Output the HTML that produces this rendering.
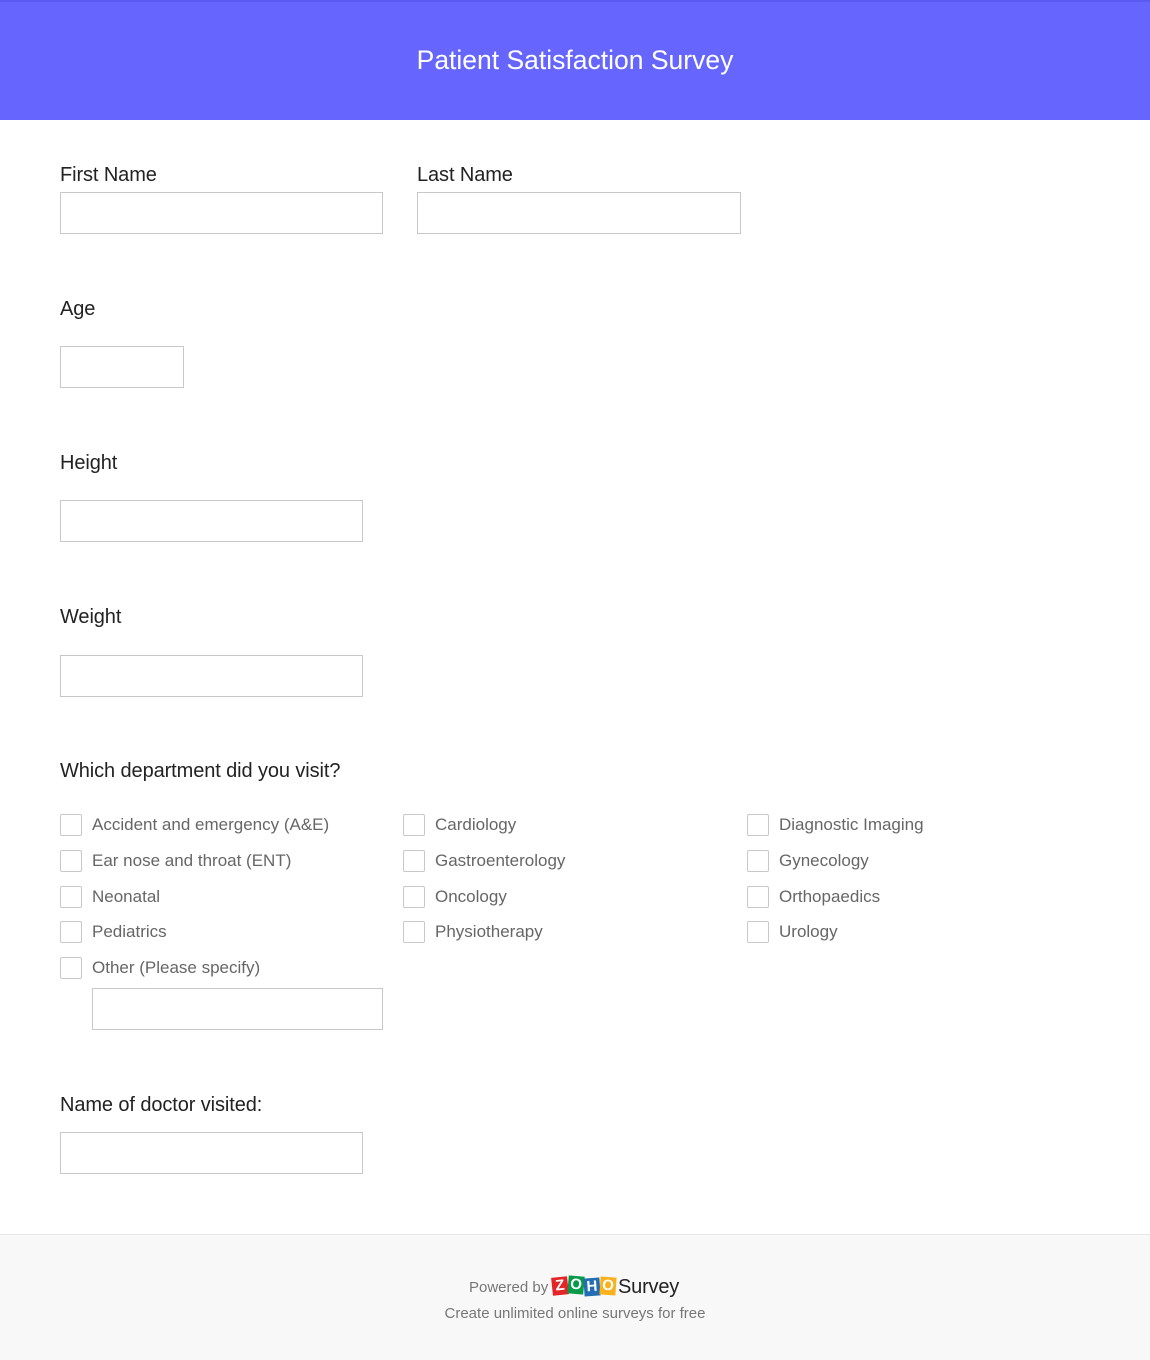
<!DOCTYPE html>
<html><head><style>
*{margin:0;padding:0;box-sizing:border-box}
body{width:1150px;height:1360px;background:#fff;font-family:"Liberation Sans",Arial,sans-serif;position:relative;overflow:hidden}
.hd{position:absolute;left:0;top:0;width:1150px;height:120px;background:#6666ff;border-top:2px solid #5a5af0;color:#fff;font-size:26.5px;text-align:center;line-height:116px}
.l{position:absolute;font-size:20px;color:#222;letter-spacing:-0.1px}
.i{position:absolute;border:1px solid #c8c8c8;height:42px;background:#fff}
.cb{position:absolute;width:22px;height:22px;border:1px solid #c8c8c8;border-radius:2px;background:#fff}
.o{position:absolute;font-size:17px;color:#666}
.ft{position:absolute;left:0;top:1234px;width:1150px;height:126px;background:#f8f8f8;border-top:1px solid #e8e8e8}
</style></head><body>
<div class="hd">Patient Satisfaction Survey</div>
<div class="l" style="left:60px;top:164px">First Name</div>
<div class="l" style="left:417px;top:164px">Last Name</div>
<div class="i" style="left:60px;top:192px;width:323px"></div>
<div class="i" style="left:417px;top:192px;width:324px"></div>
<div class="l" style="left:60px;top:298px">Age</div>
<div class="i" style="left:60px;top:346px;width:124px"></div>
<div class="l" style="left:60px;top:452px">Height</div>
<div class="i" style="left:60px;top:500px;width:303px"></div>
<div class="l" style="left:60px;top:606px">Weight</div>
<div class="i" style="left:60px;top:655px;width:303px"></div>
<div class="l" style="left:60px;top:760px">Which department did you visit?</div>

<div class="cb" style="left:60px;top:814px"></div><div class="o" style="left:92px;top:815px">Accident and emergency (A&amp;E)</div>
<div class="cb" style="left:60px;top:850px"></div><div class="o" style="left:92px;top:851px">Ear nose and throat (ENT)</div>
<div class="cb" style="left:60px;top:886px"></div><div class="o" style="left:92px;top:887px">Neonatal</div>
<div class="cb" style="left:60px;top:921px"></div><div class="o" style="left:92px;top:922px">Pediatrics</div>
<div class="cb" style="left:60px;top:957px"></div><div class="o" style="left:92px;top:958px">Other (Please specify)</div>
<div class="i" style="left:92px;top:988px;width:291px"></div>

<div class="cb" style="left:403px;top:814px"></div><div class="o" style="left:435px;top:815px">Cardiology</div>
<div class="cb" style="left:403px;top:850px"></div><div class="o" style="left:435px;top:851px">Gastroenterology</div>
<div class="cb" style="left:403px;top:886px"></div><div class="o" style="left:435px;top:887px">Oncology</div>
<div class="cb" style="left:403px;top:921px"></div><div class="o" style="left:435px;top:922px">Physiotherapy</div>

<div class="cb" style="left:747px;top:814px"></div><div class="o" style="left:779px;top:815px">Diagnostic Imaging</div>
<div class="cb" style="left:747px;top:850px"></div><div class="o" style="left:779px;top:851px">Gynecology</div>
<div class="cb" style="left:747px;top:886px"></div><div class="o" style="left:779px;top:887px">Orthopaedics</div>
<div class="cb" style="left:747px;top:921px"></div><div class="o" style="left:779px;top:922px">Urology</div>

<div class="l" style="left:60px;top:1094px">Name of doctor visited:</div>
<div class="i" style="left:60px;top:1132px;width:303px"></div>

<div class="ft">
 <div style="position:absolute;left:469px;top:44px;font-size:15px;color:#777">Powered by</div>
 <div style="position:absolute;left:552px;top:41px;height:22px;display:flex;font-weight:bold;font-size:15px;color:#fff;line-height:18px">
  <span style="background:#e42527;width:16px;height:18px;margin-top:1px;text-align:center;transform:rotate(-6deg)">Z</span>
  <span style="background:#089949;width:16px;height:18px;text-align:center;transform:rotate(5deg)">O</span>
  <span style="background:#226db4;width:16px;height:18px;margin-top:2px;text-align:center;transform:rotate(-4deg)">H</span>
  <span style="background:#f9b21d;width:16px;height:18px;margin-top:1px;text-align:center;transform:rotate(4deg)">O</span>
 </div>
 <div style="position:absolute;left:618px;top:41px;font-size:20px;color:#222;letter-spacing:-0.2px">Survey</div>
 <div style="position:absolute;left:0;width:1150px;top:70px;text-align:center;font-size:15px;color:#777">Create unlimited online surveys for free</div>
</div>
</body></html>
